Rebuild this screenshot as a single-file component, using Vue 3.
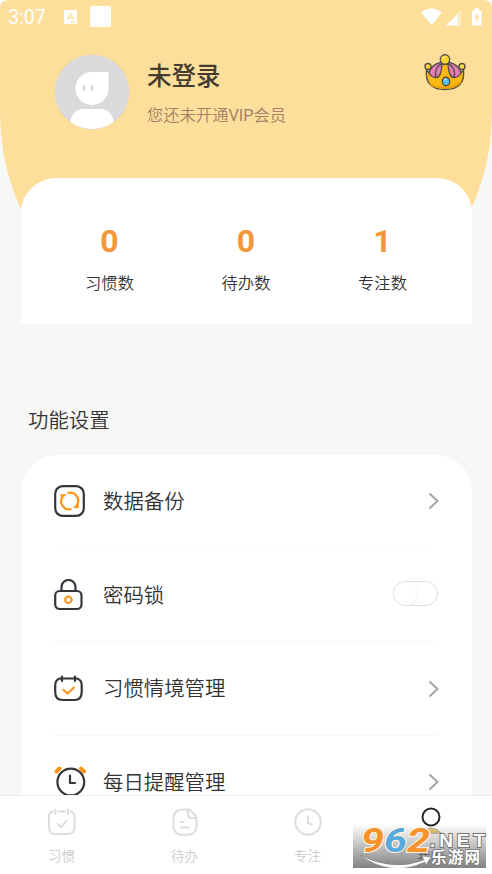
<script setup>
const stats = [
  { value: 0, label: '习惯数' },
  { value: 0, label: '待办数' },
  { value: 1, label: '专注数' },
]
const rows = [
  { icon: 'sync', label: '数据备份' },
  { icon: 'lock', label: '密码锁', toggle: true },
  { icon: 'calendar', label: '习惯情境管理' },
  { icon: 'alarm', label: '每日提醒管理' },
]
const tabs = [
  { icon: 'calendar', label: '习惯' },
  { icon: 'note', label: '待办' },
  { icon: 'clock', label: '专注' },
  { icon: 'user', label: '我的', active: true },
]
</script>

<template>
  <div class="screen">
    <svg class="backdrop" viewBox="0 0 492 260">
      <path d="M8 0H484Q492 0 492 8V115C491 152 484 180 471.500 208L440 250H52L20.500 208C8 180 1 152 0 115V8Q0 0 8 0Z" fill="#fddf9b" />
      <path d="M0 0H8Q0 0 0 8ZM492 0H484Q492 0 492 8Z" fill="#fff" />
    </svg>

    <header class="status">
      <span class="time">3:07</span>
      <svg class="status-app" viewBox="0 0 13 14">
        <rect width="13" height="14" rx="1" fill="#fff" />
        <path d="M3.500 9.500L6.500 3L9.500 9.500M4.700 7.500H8.300M7 12H11" fill="none" stroke="#fbe0a4" stroke-width="1.300" />
      </svg>
      <span class="status-square"></span>
      <svg class="signals" viewBox="0 0 62 18">
        <path d="M0 4.500Q10.500-3.500 21 4.500L10.500 17Z" fill="#fff" />
        <path d="M25 17.500L40 2.500V17.500Z" fill="#fff" />
        <path d="M36.500 6L40 2.500V17.500H36.500Z" fill="#feecc4" />
        <path d="M51 2.500H53.500V0H58V2.500H60.500V17.500H51Z" fill="#fff" />
        <path d="M57 4L53.500 10H55.500L54.500 15L58.500 8.500H56.300Z" fill="#fddf9b" />
      </svg>
    </header>

    <section class="profile">
      <svg class="avatar" viewBox="0 0 76 76">
        <defs><clipPath id="face"><circle cx="38" cy="38" r="37" /></clipPath></defs>
        <circle cx="38" cy="38" r="37.500" fill="#ead9b6" />
        <g clip-path="url(#face)">
          <rect width="76" height="76" fill="#dadada" />
          <path d="M37 18H54.500V35A16.500 16.500 0 1 1 37 18Z" fill="#fff" />
          <path d="M16 76V69Q18 55 30 55H46Q58 55 60 69V76Z" fill="#fff" />
        </g>
        <path d="M30 32V36M38 32V36" stroke="#dadada" stroke-width="2.400" stroke-linecap="round" />
      </svg>
      <div class="identity">
        <h1>未登录</h1>
        <p>您还未开通<span class="latin">VIP</span>会员</p>
      </div>
      <svg class="crown" viewBox="0 0 42 37" stroke="#55504b" stroke-width="1.400" stroke-linejoin="round">
        <path d="M5 25C3 14 12 8 21 8S39 14 37 25Z" fill="#e77db6" />
        <path d="M12 24C10 16 14 11 19 9M30 24C32 16 28 11 23 9" fill="none" />
        <path d="M2.500 15Q7 24 12 23.500Q17 24 18 10H24Q25 24 30 23.500Q35 24 39.500 15C41 30 34 35.500 21 35.500S1 30 2.500 15Z" fill="#fcb90e" />
        <path d="M6 30C12 35 30 35 37 28" stroke="#ed9f09" stroke-width="2" fill="none" />
        <circle cx="4" cy="12.500" r="3" fill="#ffd638" />
        <circle cx="38" cy="12.500" r="3" fill="#ffd638" />
        <circle cx="21" cy="5.500" r="4.700" fill="#fed42c" />
        <ellipse cx="22" cy="27.500" rx="3.700" ry="4.200" fill="#55bfe9" />
        <path d="M20.500 26L22 25M19 4L21 3" stroke="#fff2bb" stroke-width="1.500" />
      </svg>
    </section>

    <section class="stats">
      <div v-for="s in stats" :key="s.label" class="stat">
        <strong>{{ s.value }}</strong>
        <span>{{ s.label }}</span>
      </div>
    </section>

    <h2>功能设置</h2>

    <section class="settings">
      <div v-for="row in rows" :key="row.label" class="row">
        <svg class="row-icon" viewBox="0 0 32 32" fill="none" stroke="#35363c" stroke-width="2.200" stroke-linecap="round" stroke-linejoin="round">
          <template v-if="row.icon === 'sync'">
            <rect x="1.200" y="1.200" width="28.600" height="29.600" rx="7.500" />
            <g stroke="#f7981d" stroke-width="2.300" stroke-linecap="butt">
              <path d="M13.500 8.200A8 8 0 0 1 23.200 19.500M17.500 24A8 8 0 0 1 8.500 12" />
              <path d="M19.500 22.500L24.400 18V23ZM6.800 9.500H12L7.500 14Z" fill="#f7981d" stroke-width=".8" />
            </g>
          </template>
          <template v-else-if="row.icon === 'lock'">
            <rect x="1.200" y="12" width="26.300" height="18" rx="4.500" />
            <path d="M7.500 11.500V8A6.800 6.800 0 0 1 21.500 8V11.500" />
            <circle cx="14.400" cy="20.800" r="3.200" stroke="#f7981d" stroke-width="2.100" />
          </template>
          <template v-else-if="row.icon === 'calendar'">
            <path d="M8 5.500H6Q1.200 7 1.200 12V19Q1.200 27 8.500 27H20.500Q27.700 27 27.700 19V12Q27.700 7 23 5.500H21M8 5.500H21" />
            <path d="M8 3.500V8M21 3.500V8" />
            <path d="M9.500 17L13.500 20.500L20 14.500" stroke="#f7981d" />
          </template>
          <template v-else>
            <circle cx="16.800" cy="16" r="13.400" />
            <path d="M16 9.500V17H21" />
            <path d="M2.500 5.500L5.500 2.500M27 2.500L30 5.500" stroke="#f7981d" stroke-width="4" />
          </template>
        </svg>
        <span class="row-label">{{ row.label }}</span>
        <span v-if="row.toggle" class="toggle"><i></i></span>
        <svg v-else class="chevron" viewBox="0 0 12 18"><path d="M1.500 1.500L9.500 9L1.500 16.500" fill="none" stroke="#a3a3a8" stroke-width="1.900" /></svg>
      </div>
    </section>

    <nav class="tabs">
      <div v-for="t in tabs" :key="t.label" class="tab" :class="{ active: t.active }">
        <svg viewBox="0 0 30 30" fill="none" stroke="currentColor" stroke-width="2" stroke-linecap="round" stroke-linejoin="round">
          <template v-if="t.icon === 'calendar'">
            <path d="M6 4.500Q2 5.500 2 10V20Q2 27 8 27H21Q27.500 27 27.500 20V10Q27.500 5.500 23.500 4.500M12 4.500H18M8.500 2.500V7M21 2.500V7M10.500 17L14 20L19.500 14" />
          </template>
          <template v-else-if="t.icon === 'note'">
            <path d="M18 2.500H13Q3.500 2.500 3.500 12V18Q3.500 27.800 13 27.800H17Q26.500 27.800 26.500 18V11Q26.500 9.500 25.500 8.500L20.500 3.500Q19.500 2.500 18 2.500V7Q18 11 22 11H26.500M11 15H13.500M11 20.500H18.500" />
          </template>
          <template v-else-if="t.icon === 'clock'">
            <circle cx="15" cy="15" r="12.700" /><path d="M15 9.500V16L19 17.500" />
          </template>
          <template v-else>
            <circle cx="15" cy="10" r="8.500" />
            <path d="M5 26Q9 21 15 21T25 26Z" fill="#e9c965" stroke="#aaa" stroke-width="1" />
          </template>
        </svg>
        <span>{{ t.label }}</span>
      </div>
    </nav>

    <svg class="brand" viewBox="0 0 134 44">
      <defs>
        <linearGradient id="shade" x1="0" y1="0" x2="0" y2="1">
          <stop offset="0" stop-color="#777" stop-opacity="0" />
          <stop offset="1" stop-color="#777" stop-opacity=".92" />
        </linearGradient>
      </defs>
      <rect width="133" height="44" fill="url(#shade)" />
      <path d="M7 31Q39 48 71 36L69 32L78 33L73 41L72 38Q38 54 7 31Z" fill="#fff" stroke="#777" stroke-width=".5" />
      <g class="digits">
        <text x="8" y="28" textLength="23" lengthAdjust="spacingAndGlyphs" fill="#f6922c">9</text>
        <text x="31" y="28" textLength="23" lengthAdjust="spacingAndGlyphs" fill="#58a9dc">6</text>
        <text x="54" y="28" textLength="23" lengthAdjust="spacingAndGlyphs" fill="#f6922c">2</text>
      </g>
      <text class="net" x="77" y="22.500" textLength="55" lengthAdjust="spacing">.NET</text>
      <text class="site" x="78" y="39" textLength="49">乐游网</text>
    </svg>
  </div>
</template>

<style>
body { margin: 0; background: #fff; }
</style>

<style scoped>
* { box-sizing: border-box; }
.screen { position: relative; display: flex; flex-direction: column; width: 492px; height: 874px; overflow: hidden; background: #f7f7f6; font-family: Roboto, "Noto Sans CJK SC", sans-serif; color: #333; }
.backdrop { position: absolute; top: 0; left: 0; width: 492px; height: 260px; }
.status { position: relative; flex: none; display: flex; align-items: center; height: 33px; padding: 0 9px 0 8px; color: #fff; }
.time { width: 56px; padding-top: 2px; font-size: 19.500px; line-height: 32px; }
.status-app { width: 13px; height: 14px; }
.status-square { width: 21px; height: 21px; margin-left: 13px; border-radius: 1.500px; background: #fff; }
.signals { width: 62px; height: 18px; margin-left: auto; }
.profile { position: relative; flex: none; display: flex; height: 144.500px; padding: 21px 26px 0 54px; }
.avatar { width: 76px; height: 76px; }
.identity { margin-left: 17px; flex: 1; }
h1 { margin: 5px 0 0; font-size: 24.500px; line-height: 36px; font-weight: 500; color: #443c30; }
.identity p { margin: 9px 0 0; font-size: 16.300px; line-height: 24px; font-weight: 350; color: #a67f69; }
.latin { font-weight: 400; }
.crown { width: 42px; height: 37px; }
.stats { position: relative; flex: none; display: grid; grid-template-columns: repeat(3, 136.500px); justify-content: center; height: 146.500px; margin: 0 20.500px; padding-top: 42.500px; border-radius: 35px 35px 3px 3px; background: #fff; }
.stat { display: flex; flex-direction: column; align-items: center; }
.stat strong { font-size: 32px; line-height: 43px; font-weight: 700; color: #f3973a; }
.stat span { margin-top: 9px; font-size: 16.300px; line-height: 24px; font-weight: 350; color: #333; }
h2 { flex: none; margin: 82px 0 0 28px; height: 49px; font-size: 20.400px; line-height: 30px; font-weight: 350; color: #333; }
.settings { flex: 1; min-height: 0; overflow: hidden; margin: 0 20.500px; padding: 0 34px 0 33.500px; border-radius: 36px 36px 0 0; background: #fff; }
.row { display: flex; align-items: center; height: 93.700px; border-bottom: 1px solid #f8f8f8; }
.row:first-child { border-bottom-color: #fdfdfd; }
.row-icon { width: 32px; height: 32px; }
.row-label { margin-left: 17px; padding-top: 1px; font-size: 20.400px; line-height: 30px; font-weight: 350; color: #333; }
.chevron { width: 12px; height: 18px; margin-left: auto; margin-right: -2px; }
.toggle { margin-left: auto; width: 45px; height: 25px; border: 1px solid #dcdcdc; border-radius: 13px; margin-top: -4px; overflow: hidden; }
.toggle i { display: block; width: 23px; height: 23px; border-radius: 50%; background: #fff; box-shadow: 0 1px 3px #e5e5e5; }
.tabs { position: relative; flex: none; display: grid; grid-template-columns: repeat(4, 1fr); height: 79.500px; padding-top: 11px; border-top: 1px solid #eee; background: #fff; }
.tab { display: flex; flex-direction: column; align-items: center; color: #ddd; }
.tab svg { width: 30px; height: 30px; }
.tab span { margin-top: 9px; font-size: 13.500px; line-height: 20px; font-weight: 350; color: #ccc; }
.tab.active { color: #26262b; }
.tab.active span { color: #333; }
.brand { position: absolute; left: 353px; top: 824px; width: 134px; height: 44px; }
.digits { font: italic 700 34px Roboto, sans-serif; stroke: #fff3e0; stroke-width: 2px; paint-order: stroke; }
.net { font: 700 19px "Liberation Sans", sans-serif; fill: #fff; stroke: #777; stroke-width: 2px; paint-order: stroke; }
.site { font: 700 15.500px "Noto Sans CJK SC", sans-serif; fill: #fff; stroke: #777; stroke-width: 1.500px; paint-order: stroke; }
</style>
